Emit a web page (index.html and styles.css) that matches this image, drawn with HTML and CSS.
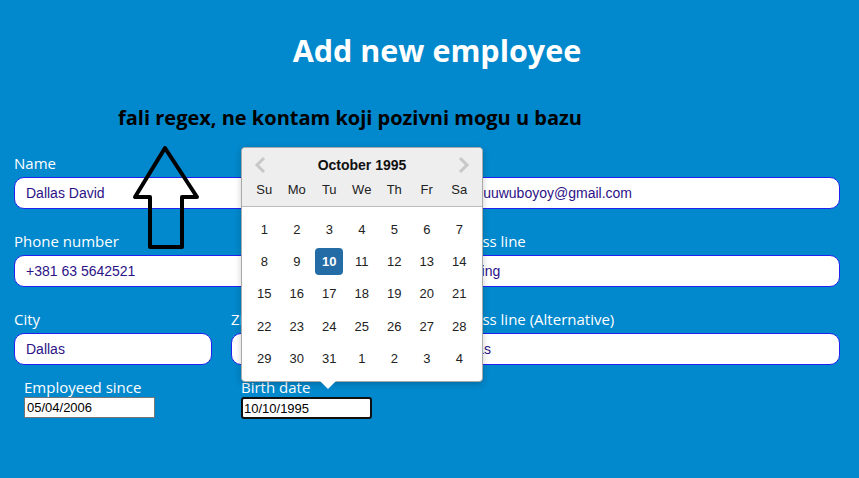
FILE: index.html
```html
<!DOCTYPE html>
<html lang="en">
<head>
  <meta charset="UTF-8">
  <meta name="viewport" content="width=device-width, initial-scale=1.0">
  <title>Add new employee</title>
  <link rel="stylesheet" href="styles.css">
</head>
<body>
  <div class="page">
    <h1>Add new employee</h1>
    <p class="note">fali regex, ne kontam koji pozivni mogu u bazu</p>

    <svg class="arrow" width="72" height="108" viewBox="0 0 72 108">
      <polygon points="33,4 3,53 18,53 18,103 50,103 50,53 65,53" fill="none" stroke="#000" stroke-width="4" stroke-linejoin="round"/>
    </svg>

    <form class="form">
      <div class="field">
        <label for="name">Name</label>
        <input type="text" id="name" value="Dallas David">
      </div>
      <div class="field">
        <label for="email">Email</label>
        <input type="text" id="email" value="dadouuwuboyoy@gmail.com">
      </div>

      <div class="field">
        <label for="phone">Phone number</label>
        <input type="text" id="phone" value="+381 63 5642521">
      </div>
      <div class="field">
        <label for="address">Address line</label>
        <input type="text" id="address" value="Nothing">
      </div>

      <div class="split">
        <div class="field">
          <label for="city">City</label>
          <input type="text" id="city" value="Dallas">
        </div>
        <div class="field">
          <label for="zip">Zip code</label>
          <input type="text" id="zip" value="">
        </div>
      </div>
      <div class="field">
        <label for="address2">Address line (Alternative)</label>
        <input type="text" id="address2" value="Dallas">
      </div>

      <div class="split dates">
        <div class="date-field">
          <label for="since">Employeed since</label>
          <input type="text" id="since" class="date" value="05/04/2006">
        </div>
        <div class="date-field">
          <label for="birth">Birth date</label>
          <input type="text" id="birth" class="date active" value="10/10/1995">
        </div>
      </div>
    </form>

    <div class="picker">
      <div class="picker-head">
        <div class="picker-title">
          <svg class="nav" width="14" height="20" viewBox="0 0 14 20"><polyline points="11,3 4,10 11,17" fill="none" stroke="#c8c8c8" stroke-width="3"/></svg>
          <span>October 1995</span>
          <svg class="nav" width="14" height="20" viewBox="0 0 14 20"><polyline points="3,3 10,10 3,17" fill="none" stroke="#c8c8c8" stroke-width="3"/></svg>
        </div>
        <div class="week">
          <span>Su</span><span>Mo</span><span>Tu</span><span>We</span><span>Th</span><span>Fr</span><span>Sa</span>
        </div>
      </div>
      <div class="days">
        <span>1</span><span>2</span><span>3</span><span>4</span><span>5</span><span>6</span><span>7</span>
        <span>8</span><span>9</span><span class="selected">10</span><span>11</span><span>12</span><span>13</span><span>14</span>
        <span>15</span><span>16</span><span>17</span><span>18</span><span>19</span><span>20</span><span>21</span>
        <span>22</span><span>23</span><span>24</span><span>25</span><span>26</span><span>27</span><span>28</span>
        <span>29</span><span>30</span><span>31</span><span>1</span><span>2</span><span>3</span><span>4</span>
      </div>
    </div>
  </div>
</body>
</html>
```

FILE: styles.css
```css
body {
  margin: 0;
  background-color: #0288cc;
  font-family: "Open Sans", "Noto Sans", sans-serif;
  color: white;
}
.page {
  position: relative;
  height: 478px;
  overflow: hidden;
}
h1 {
  margin: 0;
  padding: 30px 0 0 15px;
  text-align: center;
  font-size: 30.5px;
  line-height: 40px;
  font-weight: bold;
}
.note {
  margin: 35px 0 0 118px;
  color: #000;
  font-size: 20px;
  line-height: 26px;
  font-weight: bold;
}
.arrow {
  position: absolute;
  left: 132px;
  top: 144px;
}
.form {
  display: grid;
  grid-template-columns: 416px 400px;
  column-gap: 10px;
  row-gap: 22px;
  padding: 22px 0 0 14px;
}
.field label {
  display: block;
  font-size: 15px;
  line-height: 20px;
  margin-bottom: 4px;
}
.field input {
  display: block;
  box-sizing: border-box;
  width: 100%;
  height: 32px;
  padding: 0 11px;
  border: 1px solid #2222ee;
  border-radius: 10px;
  background: white;
  color: #2c1286;
  font-family: "Liberation Sans", Arial, sans-serif;
  font-size: 14px;
  outline: none;
}
.split {
  display: grid;
  grid-template-columns: 198px 198px;
  column-gap: 19px;
}
.dates {
  grid-column: 1 / span 2;
  margin-top: -10px;
  padding-left: 10px;
}
.date-field label {
  display: block;
  font-size: 15px;
  line-height: 20px;
}
.date {
  display: block;
  box-sizing: border-box;
  width: 131px;
  height: 21px;
  padding: 0 2px;
  border: 1px solid #767676;
  background: white;
  color: #000;
  font-family: "Liberation Sans", Arial, sans-serif;
  font-size: 13px;
  outline: none;
}
.date.active {
  height: 22px;
  border: 2px solid #101010;
  border-radius: 3px;
  padding: 0 1px;
}
.picker {
  position: absolute;
  left: 241px;
  top: 147px;
  width: 240px;
  height: 233px;
  background: white;
  border: 1px solid #aaa;
  border-radius: 4px;
  box-shadow: 0 2px 6px rgba(0, 0, 0, 0.2);
  font-family: "Liberation Sans", Arial, sans-serif;
  color: #222;
}
.picker::after {
  content: "";
  position: absolute;
  left: 78px;
  bottom: -8px;
  border-left: 8px solid transparent;
  border-right: 8px solid transparent;
  border-top: 8px solid white;
}
.picker-head {
  background: #eeeeee;
  border-bottom: 1px solid #bbb;
  border-radius: 4px 4px 0 0;
  height: 58px;
}
.picker-title {
  display: flex;
  align-items: center;
  justify-content: space-between;
  padding: 6px 11px 0 11px;
  height: 22px;
  font-size: 14px;
  font-weight: bold;
  color: #111;
}
.week,
.days {
  display: grid;
  grid-template-columns: repeat(7, 32.5px);
  padding: 0 6px;
  text-align: center;
}
.week {
  margin-top: 5px;
  font-size: 13px;
  line-height: 18px;
}
.days {
  padding-top: 6px;
  font-size: 13px;
  grid-auto-rows: 32.4px;
  align-items: center;
}
.days span {
  justify-self: center;
  width: 28px;
  line-height: 27px;
}
.days .selected {
  background: #246ca5;
  color: white;
  font-weight: bold;
  border-radius: 4px;
}
```
